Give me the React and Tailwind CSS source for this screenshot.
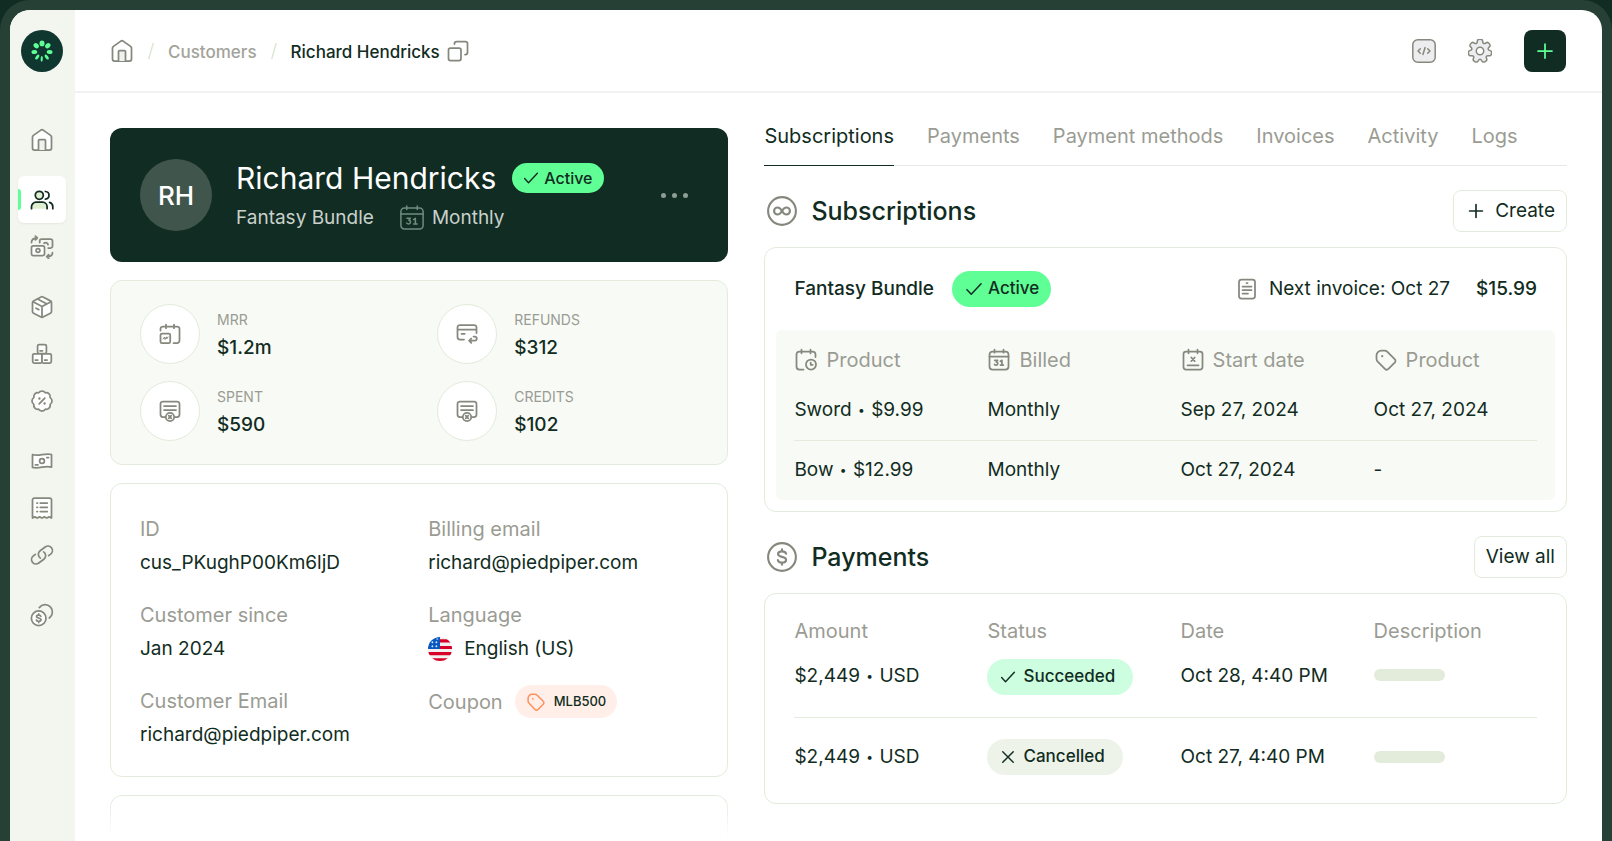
import React from "react";

function Icon({ className = "size-6", width = 1.75, children }) {
  return (
    <svg
      viewBox="0 0 24 24"
      fill="none"
      stroke="currentColor"
      strokeWidth={width}
      strokeLinecap="round"
      strokeLinejoin="round"
      aria-hidden="true"
      className={`shrink-0 ${className}`}
    >
      {children}
    </svg>
  );
}

const HomeIcon = (p) => (
  <Icon {...p}>
    <path d="M10.9 2.100 3.400 7.400a2 2 0 0 0-.9 1.700V20a2 2 0 0 0 2 2h15a2 2 0 0 0 2-2V9.100a2 2 0 0 0-.9-1.700L13.100 2.100a2 2 0 0 0-2.200 0Z" fill="#fff" />
    <path d="M8.500 22v-9.500a1 1 0 0 1 1-1h5a1 1 0 0 1 1 1V22" fill="#f1f1ee" />
  </Icon>
);

const UsersIcon = (p) => (
  <Icon {...p}>
    <circle cx="9.300" cy="7.300" r="4" fill="#dff0d2" />
    <path d="M1.500 20.700v-2a4.500 4.500 0 0 1 4.500-4.500h6.600a4.500 4.500 0 0 1 4.500 4.500v2" fill="#dff0d2" />
    <path d="M15.400 3.500c2.200.2 3.600 1.800 3.600 3.800s-1.400 3.600-3.600 3.800M19.600 14.400c1.900.6 3.200 2.200 3.200 4.300v2" />
  </Icon>
);

const SwapIcon = (p) => (
  <Icon {...p}>
    <rect x="1.500" y="10.800" width="13" height="9.800" rx="1.800" fill="#fff" />
    <circle cx="8" cy="15.500" r="1.900" />
    <path d="M9.700 7.500V6a1.800 1.800 0 0 1 1.800-1.800h9.200A1.800 1.800 0 0 1 22.500 6v5.200a1.800 1.800 0 0 1-1.800 1.800h-2.500M14 8.300c1.700-1.300 4-.4 4 1.400" />
    <path d="M1.500 7.500C1.500 4.500 3.300 3 7 3M5.400 1.200 7.300 3 5.400 4.800M22.500 17.500c0 2.800-1.800 4.200-5.500 4.200M18.700 19.700l-2 2 2 1.800" />
  </Icon>
);

const PackageIcon = (p) => (
  <Icon {...p}>
    <path d="M11 2 3.600 5.900a2 2 0 0 0-1.100 1.800v8.700a2 2 0 0 0 1.100 1.800l7.400 3.900a2 2 0 0 0 2 0l7.400-3.900a2 2 0 0 0 1.100-1.800V7.700a2 2 0 0 0-1.100-1.800L13 2a2 2 0 0 0-2 0Z" fill="#fff" />
    <path d="m3 6.800 9 4.700 9-4.700M12 11.500v10.600M7.500 4l9 4.800M6 13.200l2.800 1.400" />
  </Icon>
);

const BoxesIcon = (p) => (
  <Icon {...p}>
    <rect x="7.600" y="2.700" width="8.800" height="8.800" rx="1.500" fill="#fff" />
    <rect x="2.700" y="11.800" width="9.300" height="9.200" rx="1.500" fill="#fff" />
    <rect x="12" y="11.800" width="9.300" height="9.200" rx="1.500" fill="#fff" />
    <path d="M10 8.800h2.500M5.300 18h2.500M14.600 18h2.500" />
  </Icon>
);

const PercentIcon = (p) => (
  <Icon {...p}>
    <path
      d="M3.850 8.620a4 4 0 0 1 4.780-4.770 4 4 0 0 1 6.740 0 4 4 0 0 1 4.780 4.780 4 4 0 0 1 0 6.740 4 4 0 0 1-4.770 4.780 4 4 0 0 1-6.750 0 4 4 0 0 1-4.780-4.770 4 4 0 0 1 0-6.760Z"
      fill="#fff"
    />
    <path d="m14.800 9.200-5.600 5.600" />
    <path d="M9.400 9.500h.01M14.600 14.500h.01" strokeWidth="2.400" />
  </Icon>
);

const CashIcon = (p) => (
  <Icon {...p}>
    <path d="M2.500 5.500c3.200 1.200 6.300.8 9.500.2 3.200-.6 6.300-1.100 9.500-.2v12.600c-3.200-1-6.300-.5-9.500.1-3.200.6-6.300 1.100-9.500.2Z" fill="#fff" />
    <circle cx="12" cy="12" r="2.400" />
    <path d="M16.800 8.600h1.800M5.400 15.800h2.600" />
  </Icon>
);

const ReceiptIcon = (p) => (
  <Icon {...p}>
    <path d="M2.500 4a2 2 0 0 1 2-2h15a2 2 0 0 1 2 2v18l-2.400-1.100-2.300 1.100-2.400-1.100L12 22l-2.400-1.100L7.200 22l-2.300-1.100L2.500 22Z" fill="#fff" />
    <path d="M10.300 7h7M10.300 11.300h7M10.300 15.600h7M6.900 7h.6M6.900 11.300h.6M6.900 15.600h.6" />
  </Icon>
);

const LinkIcon = (p) => (
  <Icon {...p}>
    <path
      d="M13.190 8.688a4.500 4.500 0 0 1 1.242 7.244l-4.500 4.500a4.500 4.500 0 0 1-6.364-6.364l1.757-1.757m13.350-.622 1.757-1.757a4.500 4.500 0 0 0-6.364-6.364l-4.500 4.500a4.500 4.500 0 0 0 1.242 7.244"
      transform="rotate(8 12 12)"
    />
  </Icon>
);

const CoinsIcon = (p) => (
  <Icon {...p}>
    <circle cx="8.700" cy="15.200" r="7.300" fill="#fff" />
    <path d="M9.300 4.600a7.300 7.300 0 1 1 10 10.400" />
    <path d="M10.900 13.300c-.3-.8-1.100-1.200-2.200-1.200-1.300 0-2.200.6-2.200 1.500 0 2.200 4.500 1 4.500 3.200 0 1-1 1.600-2.300 1.600-1.200 0-2.100-.5-2.300-1.400M8.700 10.900v1.200M8.700 18.400v1.200" />
  </Icon>
);

const CopyIcon = (p) => (
  <Icon {...p}>
    <rect x="2.500" y="9" width="12.500" height="12.500" rx="2" />
    <path d="M8.500 5v-.5a2 2 0 0 1 2-2h9a2 2 0 0 1 2 2v9a2 2 0 0 1-2 2H19" />
  </Icon>
);

const CodeIcon = (p) => (
  <Icon {...p}>
    <rect x=".8" y=".8" width="22.400" height="22.400" rx="5" fill="#ededf0" />
    <path d="M8.300 9.700 6 12l2.300 2.300M15.700 9.700 18 12l-2.300 2.300M13.100 8.600l-2.200 6.800" />
  </Icon>
);

// Outline of a gear: tooth and valley corners joined by curves through their midpoints.
function gearPath(teeth, outer, inner) {
  const step = 360 / teeth;
  const corners = [];
  for (let k = 0; k < teeth; k++) {
    for (const [r, offset] of [[inner, -19], [outer, -12], [outer, 12], [inner, 19]]) {
      const a = ((k * step + offset - 90) * Math.PI) / 180;
      corners.push([12 + r * Math.cos(a), 12 + r * Math.sin(a)]);
    }
  }
  const mid = (a, b) => [(a[0] + b[0]) / 2, (a[1] + b[1]) / 2];
  const start = mid(corners[corners.length - 1], corners[0]);
  return (
    corners.reduce((d, c, i) => {
      const m = mid(c, corners[(i + 1) % corners.length]);
      return `${d}Q${c[0].toFixed(2)} ${c[1].toFixed(2)} ${m[0].toFixed(2)} ${m[1].toFixed(2)}`;
    }, `M${start[0].toFixed(2)} ${start[1].toFixed(2)}`) + "Z"
  );
}

const GEAR = gearPath(7, 12.1, 8.4);

const GearIcon = (p) => (
  <Icon {...p}>
    <path d={GEAR} fill="#ededf0" />
    <circle cx="12" cy="12" r="3.700" fill="#fff" />
  </Icon>
);

const PlusIcon = (p) => (
  <Icon {...p}>
    <path d="M12 5v14M5 12h14" />
  </Icon>
);

const CheckIcon = (p) => (
  <Icon {...p}>
    <path d="m3.500 12.800 5.200 5.400L20.500 5.800" />
  </Icon>
);

const CrossIcon = (p) => (
  <Icon {...p}>
    <path d="m5 5 14 14M19 5 5 19" />
  </Icon>
);

const Calendar31Icon = (p) => (
  <Icon {...p}>
    <rect x="2.500" y="3.500" width="19" height="18" rx="3" />
    <path d="M2.500 8.500h19M7.500 1.700v3M16.500 1.700v3" />
    <path d="M7.700 12.300h2.900L9.300 14c2.200.1 1.700 3.200-.3 3.100-.7 0-1.200-.3-1.500-.7M13.400 13.300l1.500-1v4.800M13.400 17.100h3" />
  </Icon>
);

const CalendarClockIcon = (p) => (
  <Icon {...p}>
    <path d="M9.500 21.500h-4a3 3 0 0 1-3-3v-12a3 3 0 0 1 3-3h13a3 3 0 0 1 3 3V9M7.500 1.700v3.600M16.500 1.700v3.600" />
    <circle cx="17" cy="16.500" r="5" />
    <path d="M16.700 14.500v2.300h2" />
  </Icon>
);

const CalendarCrossIcon = (p) => (
  <Icon {...p}>
    <rect x="2.500" y="3.500" width="19" height="18" rx="2.500" />
    <path d="M7.500 1.700v3.600M16.500 1.700v3.600M6.500 17.300h11M10.300 9.500l3.400 3.600M13.700 9.500l-3.400 3.600" />
  </Icon>
);

const TagIcon = (p) => (
  <Icon {...p}>
    <path d="M2.500 7.500v3.200a4 4 0 0 0 1.200 2.900l7.200 7.300a2.500 2.500 0 0 0 3.500 0l6.300-6.200a2.500 2.500 0 0 0 0-3.600l-7.300-7.200A4 4 0 0 0 10.500 2.700H7.300a4.800 4.800 0 0 0-4.800 4.800Z" />
    <path d="M8.200 8.200h.01" strokeWidth="2.200" />
  </Icon>
);

const MrrIcon = (p) => (
  <Icon {...p}>
    <path d="M2.500 8.500V7A2.500 2.500 0 0 1 5 4.500h14A2.500 2.500 0 0 1 21.500 7v11.500a2.500 2.500 0 0 1-2.500 2.500h-3.500M8 2.500v3.700M16 2.500v3.700" />
    <rect x="2.500" y="11.500" width="9.700" height="9.700" rx="1.500" />
    <path d="m5 17 1.500-2 .5 2.500 1.500-2.700.3 2L10 15" strokeWidth="1" />
  </Icon>
);

const RefundIcon = (p) => (
  <Icon {...p}>
    <path d="M9 17.500H5A2.500 2.500 0 0 1 2.500 15V5.500A2.500 2.500 0 0 1 5 3h14a2.500 2.500 0 0 1 2.500 2.500V11M2.500 7.500h19M6.500 11.800h3.200" />
    <path d="M18.500 14.500h1.200a2 2 0 0 1 0 4.200h-5.200M16.300 16.500l-2.200 2.200 2.200 2.200" />
  </Icon>
);

const CreditIcon = (p) => (
  <Icon {...p}>
    <path d="M7.500 18H5a2.500 2.500 0 0 1-2.500-2.500V5A2.500 2.500 0 0 1 5 2.500h14A2.500 2.500 0 0 1 21.500 5v10.500A2.500 2.500 0 0 1 19 18h-2.500M6 7h12M6 11h12" />
    <circle cx="12" cy="18" r="4.200" />
    <path d="m10.700 16.700 2.600 2.600M13.300 16.700l-2.600 2.600" />
  </Icon>
);

const InvoiceIcon = (p) => (
  <Icon {...p}>
    <rect x="4" y="2.500" width="16" height="19" rx="2.500" />
    <path d="M11.500 6h1M7.500 9.500h9M7.500 13h9M7.500 16.500h5.500" />
  </Icon>
);

const InfinityIcon = (p) => (
  <Icon {...p}>
    <circle cx="12" cy="12" r="9.800" />
    <path d="M12 12c-.9-1.600-1.900-2.500-3.100-2.500a2.500 2.500 0 0 0 0 5C10.100 14.500 11.100 13.600 12 12Zm0 0c.9-1.600 1.900-2.500 3.100-2.500a2.500 2.500 0 0 1 0 5C13.900 14.500 12.900 13.600 12 12Z" />
  </Icon>
);

const DollarIcon = (p) => (
  <Icon {...p}>
    <circle cx="12" cy="12" r="9.800" />
    <path d="M14.900 9.700c-.3-1.100-1.400-1.700-2.900-1.700-1.700 0-2.800.7-2.800 1.900 0 2.700 5.700 1.300 5.700 4.100 0 1.300-1.200 2-2.900 2-1.600 0-2.700-.6-2.900-1.800M12 6.500V8M12 16v1.500" />
  </Icon>
);

function Logo() {
  return (
    <svg viewBox="0 0 42 42" className="size-[42px]" aria-hidden="true">
      <circle cx="21" cy="21" r="21" fill="#0f362f" />
      <g fill="#5fff95">
        <ellipse cx="21" cy="13.400" rx="2.500" ry="2.900" />
        <ellipse cx="21" cy="13.200" rx="2.300" ry="2.900" transform="rotate(48 21 21)" />
        <ellipse cx="21" cy="13.200" rx="2.300" ry="2.900" transform="rotate(-48 21 21)" />
        <ellipse cx="21" cy="13.300" rx="2" ry="2.900" transform="rotate(98 21 21)" />
        <ellipse cx="21" cy="13.300" rx="2" ry="2.900" transform="rotate(-98 21 21)" />
        <ellipse cx="21" cy="13.300" rx="1.500" ry="2.900" transform="rotate(142 21 21)" />
        <ellipse cx="21" cy="13.300" rx="1.500" ry="2.900" transform="rotate(-142 21 21)" />
        <ellipse cx="21" cy="13.200" rx="1.100" ry="2.900" transform="rotate(182 21 21)" />
      </g>
    </svg>
  );
}

function FlagUS() {
  return (
    <svg viewBox="0 0 24 24" className="size-6 shrink-0" aria-hidden="true">
      <clipPath id="flag-disc">
        <circle cx="12" cy="12" r="12" />
      </clipPath>
      <g clipPath="url(#flag-disc)">
        <rect width="24" height="24" fill="#f0f0f0" />
        <path d="M12 2.300h12v3.300H12zM12 9h12v3H12zM0 15h24v3.200H0zM0 21.200h24V24H0z" fill="#d80027" />
        <path d="M0 0h12v12H0z" fill="#0a57c2" />
        <path
          d="M3.500 5.300h1.800M7.500 5.300h1.800M3.500 9.300h1.800M7.500 9.300h1.800M8.400 2h1.800M4.400 4.400v1.800M8.400 4.400v1.800M4.400 8.400v1.800M8.400 8.400v1.800"
          stroke="#dfe9f7"
          strokeWidth="1"
        />
      </g>
    </svg>
  );
}

const navGroups = [
  [{ label: "Home", icon: HomeIcon }],
  [
    { label: "Customers", icon: UsersIcon, active: true },
    { label: "Transactions", icon: SwapIcon },
  ],
  [
    { label: "Products", icon: PackageIcon },
    { label: "Bundles", icon: BoxesIcon },
    { label: "Coupons", icon: PercentIcon },
  ],
  [
    { label: "Payments", icon: CashIcon },
    { label: "Invoices", icon: ReceiptIcon },
    { label: "Payment links", icon: LinkIcon },
  ],
  [{ label: "Payouts", icon: CoinsIcon }],
];

function Sidebar() {
  return (
    <aside className="flex w-[65px] shrink-0 flex-col items-center bg-[#f3f6ef] pt-5 pr-px">
      <a href="#" aria-label="Dashboard">
        <Logo />
      </a>
      <nav aria-label="Main" className="mt-11 flex flex-col gap-[13px]">
        {navGroups.map((group, i) => (
          <ul key={i}>
            {group.map(({ label, icon: I, active }) => (
              <li key={label}>
                <a
                  href="#"
                  aria-label={label}
                  className={
                    active
                      ? "relative flex h-[47px] w-12 items-center justify-center rounded-md bg-white text-[#112c22] shadow-sm shadow-black/5"
                      : "flex h-[47px] w-12 items-center justify-center text-[#85887d]"
                  }
                >
                  {active && <span className="absolute left-0 h-[21px] w-[3px] rounded-r-sm bg-[#5fff95]" />}
                  <I />
                </a>
              </li>
            ))}
          </ul>
        ))}
      </nav>
    </aside>
  );
}

function Header() {
  return (
    <header className="flex h-[83px] items-center justify-between border-b-2 border-[#f2f2f2] pr-9 pl-[35px]">
      <nav aria-label="Breadcrumb" className="flex items-center text-[17px] leading-6 font-medium">
        <a href="#" aria-label="Home" className="text-[#85887d]">
          <HomeIcon />
        </a>
        <Slash />
        <a href="#" className="pt-0.5 text-[#a2a39b]">
          Customers
        </a>
        <Slash />
        <span className="pt-0.5 text-[#112c22]">Richard Hendricks</span>
        <button type="button" aria-label="Copy name" className="ml-1.5 text-[#85887d]">
          <CopyIcon />
        </button>
      </nav>
      <div className="flex items-center gap-8 text-[#85887d]">
        <button type="button" aria-label="Developers">
          <CodeIcon width={1.5} />
        </button>
        <button type="button" aria-label="Settings">
          <GearIcon width={1.5} />
        </button>
        <button
          type="button"
          aria-label="New"
          className="flex size-[42px] items-center justify-center rounded-lg bg-[#112c22] text-[#5fff95]"
        >
          <PlusIcon className="size-6" />
        </button>
      </div>
    </header>
  );
}

function Slash() {
  return (
    <svg viewBox="0 0 6 18" className="mx-[14px] h-[18px] w-1.5" aria-hidden="true">
      <path d="M5.300 1 .7 17" stroke="#dbe8d0" strokeWidth="1.400" />
    </svg>
  );
}

function ProfileCard() {
  return (
    <section className="flex h-[134px] items-center rounded-xl bg-[#112c22] px-[30px]">
      <div className="flex size-[72px] shrink-0 items-center justify-center rounded-full bg-[#40564d] text-[26px] font-medium text-white">
        RH
      </div>
      <div className="ml-6 flex-1 pt-1.5">
        <div className="flex items-center gap-4">
          <h1 className="text-[30px] leading-10 whitespace-nowrap text-white">Richard Hendricks</h1>
          <span className="flex h-[30px] items-center gap-1 rounded-full bg-[#5fff95] pr-3 pl-2.5 text-base font-medium text-[#112c22]">
            <CheckIcon className="size-[18px]" width={1.9} />
            Active
          </span>
        </div>
        <div className="flex items-center text-[19px] leading-10 text-[#c9d1cc]">
          <span>Fantasy Bundle</span>
          <Calendar31Icon className="mr-1.5 ml-6 size-7 text-[#6f8c80]" width={1.3} />
          <span>Monthly</span>
        </div>
      </div>
      <button type="button" aria-label="More actions" className="mr-2.5 flex gap-1.5">
        <span className="size-[5px] rounded-full bg-[#8e9e96]" />
        <span className="size-[5px] rounded-full bg-[#8e9e96]" />
        <span className="size-[5px] rounded-full bg-[#8e9e96]" />
      </button>
    </section>
  );
}

const stats = [
  { label: "MRR", value: "$1.2m", icon: MrrIcon },
  { label: "REFUNDS", value: "$312", icon: RefundIcon },
  { label: "SPENT", value: "$590", icon: CreditIcon },
  { label: "CREDITS", value: "$102", icon: CreditIcon },
];

function StatsCard() {
  return (
    <section className="grid grid-cols-2 gap-x-9 gap-y-[17px] rounded-xl border border-[#e3ecdc] bg-[#f8faf6] px-[29px] py-[23px]">
      {stats.map(({ label, value, icon: I }) => (
        <div key={label} className="flex items-center">
          <div className="flex size-[60px] items-center justify-center rounded-full border border-[#e3ebdb] bg-white text-[#85887d]">
            <I />
          </div>
          <dl className="ml-[17px]">
            <dt className="text-sm leading-7 text-[#9a9c93]">{label}</dt>
            <dd className="text-[19px] leading-7 font-medium text-[#112c22]">{value}</dd>
          </dl>
        </div>
      ))}
    </section>
  );
}

function Detail({ label, children }) {
  return (
    <div>
      <dt className="flex items-center text-xl leading-[33px] text-[#9a9c93]">{label}</dt>
      <dd className="flex items-center gap-3 text-[19px] leading-[33px] text-[#112c22]">{children}</dd>
    </div>
  );
}

function DetailsCard() {
  return (
    <section className="rounded-xl border border-[#e3ecdc] px-[29px] pt-[29px] pb-[25px]">
      <dl className="grid grid-cols-2 gap-x-[18px] gap-y-5">
        <Detail label="ID">cus_PKughP00Km6ljD</Detail>
        <Detail label="Billing email">richard@piedpiper.com</Detail>
        <Detail label="Customer since">Jan 2024</Detail>
        <Detail label="Language">
          <FlagUS />
          English (US)
        </Detail>
        <Detail label="Customer Email">richard@piedpiper.com</Detail>
        <div className="flex h-[33px] items-center gap-3">
          <dt className="text-xl text-[#9a9c93]">Coupon</dt>
          <dd className="flex h-[33px] items-center gap-2 rounded-full bg-[#ffefe8] px-[11px] text-[13px] font-medium text-[#112c22]">
            <TagIcon className="size-5 text-[#ff8f5a]" width={1.8} />
            MLB500
          </dd>
        </div>
      </dl>
    </section>
  );
}

const tabs = ["Subscriptions", "Payments", "Payment methods", "Invoices", "Activity", "Logs"];

function Tabs() {
  return (
    <div role="tablist" className="flex gap-[33px] border-b border-[#e8e9e6] text-xl leading-7">
      {tabs.map((t, i) => (
        <button
          key={t}
          type="button"
          role="tab"
          aria-selected={i === 0}
          className={
            i === 0
              ? "-mb-px border-b border-[#112c22] pt-px pb-[15px] whitespace-nowrap text-[#112c22]"
              : "-mb-px border-b border-transparent pt-px pb-[15px] whitespace-nowrap text-[#9a9c93]"
          }
        >
          {t}
        </button>
      ))}
    </div>
  );
}

function SectionHeading({ icon: I, title, children }) {
  return (
    <div className="flex items-center justify-between pl-px">
      <h2 className="flex items-center gap-3 text-[25px] leading-8 font-medium text-[#112c22]">
        <I className="size-[34px] text-[#85887d]" width={1.5} />
        {title}
      </h2>
      <button
        type="button"
        className="flex h-[42px] items-center gap-2 rounded-lg border border-[#e3ecdc] px-[11px] text-[19px] text-[#112c22]"
      >
        {children}
      </button>
    </div>
  );
}

function Pair({ left, right }) {
  return (
    <>
      {left} <span className="px-px align-[2px] text-xs leading-none">•</span> {right}
    </>
  );
}

const subColumns = [
  { label: "Product", icon: CalendarClockIcon },
  { label: "Billed", icon: Calendar31Icon },
  { label: "Start date", icon: CalendarCrossIcon },
  { label: "Product", icon: TagIcon },
];

const subRows = [
  { name: "Sword", price: "$9.99", billed: "Monthly", start: "Sep 27, 2024", end: "Oct 27, 2024" },
  { name: "Bow", price: "$12.99", billed: "Monthly", start: "Oct 27, 2024", end: "-" },
];

function Columns() {
  return (
    <colgroup>
      <col className="w-[26%]" />
      <col className="w-[26%]" />
      <col className="w-[26%]" />
      <col className="w-[22%]" />
    </colgroup>
  );
}

function SubscriptionsSection() {
  return (
    <section>
      <SectionHeading icon={InfinityIcon} title="Subscriptions">
        <PlusIcon className="size-[22px]" width={1.8} />
        Create
      </SectionHeading>
      <div className="mt-[15px] rounded-xl border border-[#e3ecdc] px-[11px] pb-[11px]">
        <div className="flex h-[82px] items-center px-[18px] text-[19px] text-[#112c22]">
          <span className="font-medium">Fantasy Bundle</span>
          <span className="ml-[18px] flex h-9 items-center gap-1 rounded-full bg-[#5fff95] px-3 text-[17px] font-medium">
            <CheckIcon className="size-5" width={1.8} />
            Active
          </span>
          <span className="ml-auto flex items-center gap-2.5">
            <InvoiceIcon className="size-6 text-[#85887d]" />
            Next invoice: Oct 27
          </span>
          <span className="ml-[26px] font-medium">$15.99</span>
        </div>
        <div className="rounded-md bg-[#f8faf6] px-[18px]">
          <table className="w-full table-fixed text-left text-[19px] text-[#112c22]">
            <Columns />
            <thead>
              <tr className="h-[50px] align-bottom text-xl text-[#9a9c93]">
                {subColumns.map(({ label, icon: I }, i) => (
                  <th key={i} scope="col" className="p-0 pb-1.5 font-normal">
                    <span className="flex items-center gap-2">
                      <I className="size-6 text-[#85887d]" />
                      {label}
                    </span>
                  </th>
                ))}
              </tr>
            </thead>
            <tbody>
              {subRows.map(({ name, price, billed, start, end }) => (
                <tr key={name} className="h-[60px] border-t border-[#e3ecdc] first:border-t-0">
                  <td className="p-0">
                    <Pair left={name} right={price} />
                  </td>
                  <td className="p-0">{billed}</td>
                  <td className="p-0">{start}</td>
                  <td className="p-0">{end}</td>
                </tr>
              ))}
            </tbody>
          </table>
        </div>
      </div>
    </section>
  );
}

const payments = [
  { amount: "$2,449", ok: true, date: "Oct 28, 4:40 PM" },
  { amount: "$2,449", ok: false, date: "Oct 27, 4:40 PM" },
];

function PaymentsSection() {
  return (
    <section>
      <SectionHeading icon={DollarIcon} title="Payments">
        View all
      </SectionHeading>
      <div className="mt-[15px] rounded-xl border border-[#e3ecdc] px-[29px] pt-[21px] pb-[7px]">
        <table className="w-full table-fixed text-left text-[19px] text-[#112c22]">
          <Columns />
          <thead>
            <tr className="h-8 text-xl text-[#9a9c93]">
              {["Amount", "Status", "Date", "Description"].map((c) => (
                <th key={c} scope="col" className="p-0 font-normal">
                  {c}
                </th>
              ))}
            </tr>
          </thead>
          <tbody>
            {payments.map(({ amount, ok, date }) => (
              <tr key={date} className="border-t border-[#e3ecdc] first:border-t-0">
                <td className={ok ? "pt-2.5 pb-[22px]" : "py-[21px]"}>
                  <Pair left={amount} right="USD" />
                </td>
                <td className={ok ? "pt-3 pb-[22px]" : "py-[21px]"}>
                  <span
                    className={
                      ok
                        ? "inline-flex h-9 items-center gap-1.5 rounded-full bg-[#cdfee0] pr-[18px] pl-3 align-top text-[17px] font-medium"
                        : "inline-flex h-9 items-center gap-1.5 rounded-full bg-[#edf3e9] pr-[18px] pl-3 align-top text-[17px] font-medium"
                    }
                  >
                    {ok ? <CheckIcon className="size-[18px]" width={1.9} /> : <CrossIcon className="size-[18px]" width={1.9} />}
                    {ok ? "Succeeded" : "Cancelled"}
                  </span>
                </td>
                <td className={ok ? "pt-2.5 pb-[22px]" : "py-[21px]"}>{date}</td>
                <td className={ok ? "pt-2 pb-[22px]" : "py-[21px]"}>
                  <span className="block h-3 w-[71px] rounded-full bg-[#e3ecdb]" />
                </td>
              </tr>
            ))}
          </tbody>
        </table>
      </div>
    </section>
  );
}

export default function App() {
  return (
    <div className="flex min-h-screen bg-[#112c22] font-['Inter','Liberation_Sans',sans-serif]">
      <div className="flex flex-1 rounded-t-[30px] bg-[#264035] px-[10px] pt-[10px]">
        <div className="flex flex-1 overflow-hidden rounded-t-[20px] bg-white">
          <Sidebar />
          <div className="flex min-w-0 flex-1 flex-col">
            <Header />
            <main className="grid flex-1 grid-cols-[618fr_802fr] gap-9 px-[35px] pt-7">
              <div className="flex flex-col gap-[18px] pt-[7px]">
                <ProfileCard />
                <StatsCard />
                <DetailsCard />
                <div className="min-h-[47px] flex-1 rounded-t-xl border border-b-0 border-[#e3ecdc] mask-b-from-10% mask-b-to-90%" />
              </div>
              <div className="flex flex-col gap-6 pb-9">
                <Tabs />
                <SubscriptionsSection />
                <PaymentsSection />
              </div>
            </main>
          </div>
        </div>
      </div>
    </div>
  );
}
